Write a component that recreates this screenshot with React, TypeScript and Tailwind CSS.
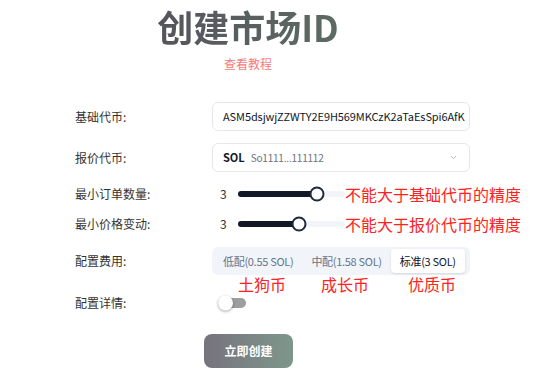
import React from 'react';

const font = { fontFamily: '"Noto Sans CJK SC", "Noto Sans", sans-serif' };

const sliders = [
  { label: '最小订单数量:', value: 74, note: '不能大于基础代币的精度' },
  { label: '最小价格变动:', value: 57, note: '不能大于报价代币的精度' },
];

const tiers = ['低配(0.55 SOL)', '中配(1.58 SOL)', '标准(3 SOL)'];

function Label({ children }: { children: React.ReactNode }) {
  return <div className="w-[137px] shrink-0 text-[12px] text-[#333]">{children}</div>;
}

export default function App() {
  return (
    <div className="w-[554px] h-[380px] bg-white overflow-hidden" style={font}>
      {/* Header */}
      <div className="w-[496px] text-center">
        <h1 className="h-[53px] leading-[53px] text-[36px] font-bold">
          <span className="bg-linear-to-r from-[#55545c] to-[#5d6b63] bg-clip-text text-transparent">
            创建市场ID
          </span>
        </h1>
        <div className="h-[22px] leading-[22px] text-[12px] text-[#f77b7b]">查看教程</div>
      </div>

      {/* Form */}
      <div className="mt-[27px] pl-[75px]">
        <div className="flex items-center h-[29px]">
          <Label>基础代币:</Label>
          <div className="w-[258px] h-[29px] flex items-center px-[10px] border border-[#e5e7eb] rounded-md text-[11px] tracking-[-0.1px] text-[#111827] whitespace-nowrap overflow-hidden">
            ASM5dsjwjZZWTY2E9H569MKCzK2aTaEsSpi6AfK
          </div>
        </div>

        <div className="flex items-center h-[29px] mt-[12px]">
          <Label>报价代币:</Label>
          <div className="w-[258px] h-[29px] flex items-center px-[10px] border border-[#e5e7eb] rounded-md">
            <span className="text-[11px] font-bold text-[#111827]">SOL</span>
            <span className="ml-[6px] text-[10px] tracking-[-0.2px] text-[#6b7280]">So1111...111112</span>
            <svg className="ml-auto mr-[1px]" width="9" height="9" viewBox="0 0 24 24" fill="none" stroke="#9ca3af" strokeWidth="2" strokeLinecap="round" strokeLinejoin="round">
              <path d="m6 9 6 6 6-6" />
            </svg>
          </div>
        </div>

        {sliders.map((s, i) => (
          <div key={s.label} className={`flex items-center h-[24px] ${i === 0 ? 'mt-[10px]' : 'mt-[6px]'}`}>
            <Label>{s.label}</Label>
            <div className="w-[26px] pl-[8px] text-[12px] text-[#333]">3</div>
            <div className="relative w-[107px] h-[6px] rounded-full bg-[#f1f5f9]">
              <div className="h-full rounded-full bg-[#111827]" style={{ width: `${s.value}%` }} />
              <div
                className="absolute top-1/2 w-[15px] h-[15px] -translate-x-1/2 -translate-y-1/2 rounded-full bg-white border-2 border-[#1e293b]"
                style={{ left: `${s.value}%` }}
              />
            </div>
            <div className="text-[16px] text-[#ff2222] whitespace-nowrap">{s.note}</div>
          </div>
        ))}

        <div className="flex items-center h-[28px] mt-[11px]">
          <Label>配置费用:</Label>
          <div className="w-[258px] h-[28px] flex items-center p-[2px] rounded-md bg-[#f1f5f9]">
            {tiers.map((t, i) => (
              <div
                key={t}
                className={`h-[24px] flex items-center px-[9px] rounded text-[11px] tracking-[-0.3px] whitespace-nowrap ${
                  i === 2 ? 'bg-white text-[#0f172a] shadow-sm' : 'text-[#64748b]'
                }`}
              >
                {t}
              </div>
            ))}
          </div>
        </div>

        <div className="flex items-center h-[17px] text-[16px] text-[#ff2222] leading-none">
          <div className="w-[137px] shrink-0" />
          <span className="ml-[26px]">土狗币</span>
          <span className="ml-[35px]">成长币</span>
          <span className="ml-[39px]">优质币</span>
        </div>

        <div className="flex items-center h-[20px] mt-[1px]">
          <Label>配置详情:</Label>
          <div className="relative ml-[6px] w-[28px] h-[10px] rounded-full bg-[#9e9e9e]">
            <div className="absolute left-0 top-1/2 -translate-y-1/2 w-[15px] h-[15px] rounded-full bg-white shadow-[0_1px_3px_rgba(0,0,0,0.35)]" />
          </div>
        </div>

        <button className="mt-[21px] ml-[129px] w-[89px] h-[34px] rounded-lg bg-linear-to-r from-[#76737e] to-[#7e978a] text-white text-[12px] font-bold">
          立即创建
        </button>
      </div>
    </div>
  );
}
